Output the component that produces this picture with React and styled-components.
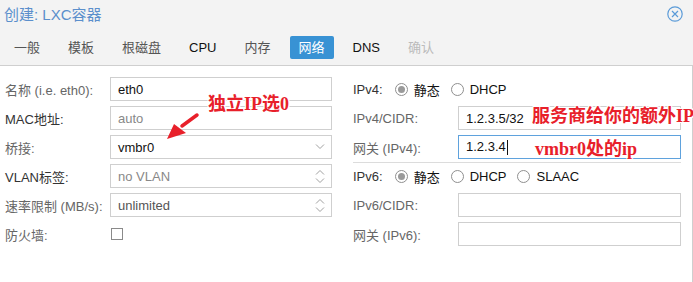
import React from 'react'
import styled, { createGlobalStyle } from 'styled-components'

const GlobalStyle = createGlobalStyle`
  body {
    margin: 0;
    background: #fff;
    font-family: "Liberation Sans", "Noto Sans CJK SC", sans-serif;
  }
`

const Window = styled.div`
  width: 693px;
  height: 282px;
  display: flex;
  flex-direction: column;
  overflow: hidden;
`

const Header = styled.div`
  background: #f3f3f3;
  border-bottom: 1px solid #cfcfcf;
  padding-bottom: 6px;
`

const TitleBar = styled.div`
  height: 26px;
  display: flex;
  align-items: center;
  justify-content: space-between;
  padding: 0 10px 0 4px;
`

const Title = styled.div`
  font-size: 15px;
  color: #5b8fcc;
`

const CloseButton = styled.div`
  width: 16px;
  height: 16px;
  display: flex;
  margin-top: 1px;
`

const Tabs = styled.div`
  display: flex;
  gap: 10px;
  margin-top: 10px;
  padding-left: 5px;
`

const Tab = styled.div`
  height: 23px;
  line-height: 23px;
  padding: 0 9px;
  font-size: 13px;
  border-radius: 2px;
  color: ${p => p.active ? '#fff' : p.disabled ? '#bbb' : p.dark ? '#111' : '#555'};
  background: ${p => p.active ? '#3892d4' : 'transparent'};
`

const Body = styled.div`
  flex: 1;
  position: relative;
  background: #fff;
  border-right: 1px solid #cfcfcf;
  padding: 11px 0 0 5px;
  display: grid;
  grid-template-columns: 327px 328px;
  column-gap: 21px;
  align-content: start;
`

const Column = styled.div`
  display: flex;
  flex-direction: column;
  gap: 5px;
`

const Row = styled.div`
  height: 24px;
  display: flex;
  align-items: center;
  font-size: 13px;
`

const Label = styled.div`
  width: ${p => p.auto ? 'auto' : '105px'};
  margin-right: ${p => p.auto ? '12px' : '0'};
  flex-shrink: 0;
  color: ${p => p.dark ? '#333' : '#666'};
  white-space: nowrap;
`

const Field = styled.div`
  flex: 1;
  height: 24px;
  box-sizing: border-box;
  border: 1px solid ${p => p.focused ? '#5fa2dd' : '#cfcfcf'};
  padding: 0 6px 0 7px;
  display: flex;
  align-items: center;
  justify-content: space-between;
  color: ${p => p.tone || '#111'};
  font-size: 13px;
`

const Caret = styled.span`
  display: inline-block;
  width: 1px;
  height: 15px;
  background: #111;
  margin-left: 1px;
  vertical-align: middle;
`

const Checkbox = styled.div`
  width: 12px;
  height: 12px;
  border: 1px solid #8a8a8a;
  box-sizing: border-box;
  margin-left: 1px;
`

const Radio = styled.div`
  display: flex;
  align-items: center;
  margin-right: 11px;
  color: #111;
`

const RadioDot = styled.span`
  width: 13px;
  height: 13px;
  box-sizing: border-box;
  border-radius: 50%;
  border: 1px solid #8f8f8f;
  margin-right: 6px;
  display: flex;
  align-items: center;
  justify-content: center;
  &::after {
    content: '';
    width: 7px;
    height: 7px;
    border-radius: 50%;
    background: ${p => p.checked ? '#9a9a9a' : 'transparent'};
  }
`

const Divider = styled.div`
  height: 1px;
  background: #dcdcdc;
  margin: -2px 0 -4px;
`

const Note = styled.div`
  position: absolute;
  left: ${p => p.x}px;
  top: ${p => p.y}px;
  font-family: "Liberation Serif", "Noto Sans CJK SC", serif;
  font-weight: bold;
  font-size: 18px;
  line-height: 18px;
  color: #e8202a;
  white-space: nowrap;
  text-shadow: 1px 0 0 #fff, -1px 0 0 #fff, 0 1px 0 #fff, 0 -1px 0 #fff,
    1px 1px 0 #fff, -1px -1px 0 #fff, 1px -1px 0 #fff, -1px 1px 0 #fff;
`

const Arrow = styled.svg`
  position: absolute;
  left: 160px;
  top: 42px;
`

const Chevron = ({ up }) => (
  <svg width="10" height="6" viewBox="0 0 10 6">
    <path d={up ? 'M1 5.5L5 1.5L9 5.5' : 'M1 0.5L5 4.5L9 0.5'} fill="none" stroke="#a0a0a0" strokeWidth="1" />
  </svg>
)

const Spinner = () => (
  <span style={{ display: 'flex', flexDirection: 'column', gap: 3 }}>
    <Chevron up />
    <Chevron />
  </span>
)

const tabs = [
  { name: '一般' },
  { name: '模板' },
  { name: '根磁盘' },
  { name: 'CPU', dark: true },
  { name: '内存' },
  { name: '网络', active: true },
  { name: 'DNS', dark: true },
  { name: '确认', disabled: true },
]

const RadioItem = ({ checked, children }) => (
  <Radio>
    <RadioDot checked={checked} />
    {children}
  </Radio>
)

export default function App() {
  return (
    <Window>
      <GlobalStyle />
      <Header>
        <TitleBar>
          <Title>创建: LXC容器</Title>
          <CloseButton>
            <svg width="16" height="16" viewBox="0 0 16 16">
              <circle cx="8" cy="8" r="7.2" fill="none" stroke="#5b9bd8" strokeWidth="1.2" />
              <path d="M5 5L11 11M11 5L5 11" stroke="#5b9bd8" strokeWidth="1.2" />
            </svg>
          </CloseButton>
        </TitleBar>
        <Tabs>
          {tabs.map(t => (
            <Tab key={t.name} active={t.active} disabled={t.disabled} dark={t.dark}>{t.name}</Tab>
          ))}
        </Tabs>
      </Header>
      <Body>
        <Column>
          <Row>
            <Label>名称 (i.e. eth0):</Label>
            <Field>eth0</Field>
          </Row>
          <Row>
            <Label dark>MAC地址:</Label>
            <Field tone="#888">auto</Field>
          </Row>
          <Row>
            <Label>桥接:</Label>
            <Field>vmbr0<Chevron /></Field>
          </Row>
          <Row>
            <Label dark>VLAN标签:</Label>
            <Field tone="#888">no VLAN<Spinner /></Field>
          </Row>
          <Row>
            <Label>速率限制 (MB/s):</Label>
            <Field tone="#555">unlimited<Spinner /></Field>
          </Row>
          <Row>
            <Label>防火墙:</Label>
            <Checkbox />
          </Row>
        </Column>
        <Column>
          <Row>
            <Label auto dark>IPv4:</Label>
            <RadioItem checked>静态</RadioItem>
            <RadioItem>DHCP</RadioItem>
          </Row>
          <Row>
            <Label>IPv4/CIDR:</Label>
            <Field>1.2.3.5/32</Field>
          </Row>
          <Row>
            <Label>网关 (IPv4):</Label>
            <Field focused><span>1.2.3.4<Caret /></span></Field>
          </Row>
          <Divider />
          <Row>
            <Label auto dark>IPv6:</Label>
            <RadioItem checked>静态</RadioItem>
            <RadioItem>DHCP</RadioItem>
            <RadioItem>SLAAC</RadioItem>
          </Row>
          <Row>
            <Label>IPv6/CIDR:</Label>
            <Field />
          </Row>
          <Row>
            <Label>网关 (IPv6):</Label>
            <Field />
          </Row>
        </Column>

        <Note x={208} y={29}>独立IP选0</Note>
        <Note x={532} y={41}>服务商给你的额外IP</Note>
        <Note x={535} y={74}>vmbr0处的ip</Note>
        <Arrow width="50" height="35" viewBox="0 0 50 35">
          <path d="M37 7L22 18" stroke="#e8202a" strokeWidth="3.5" strokeLinecap="round" />
          <polygon points="7,31 14,16 26,25" fill="#e8202a" />
        </Arrow>
      </Body>
    </Window>
  )
}
